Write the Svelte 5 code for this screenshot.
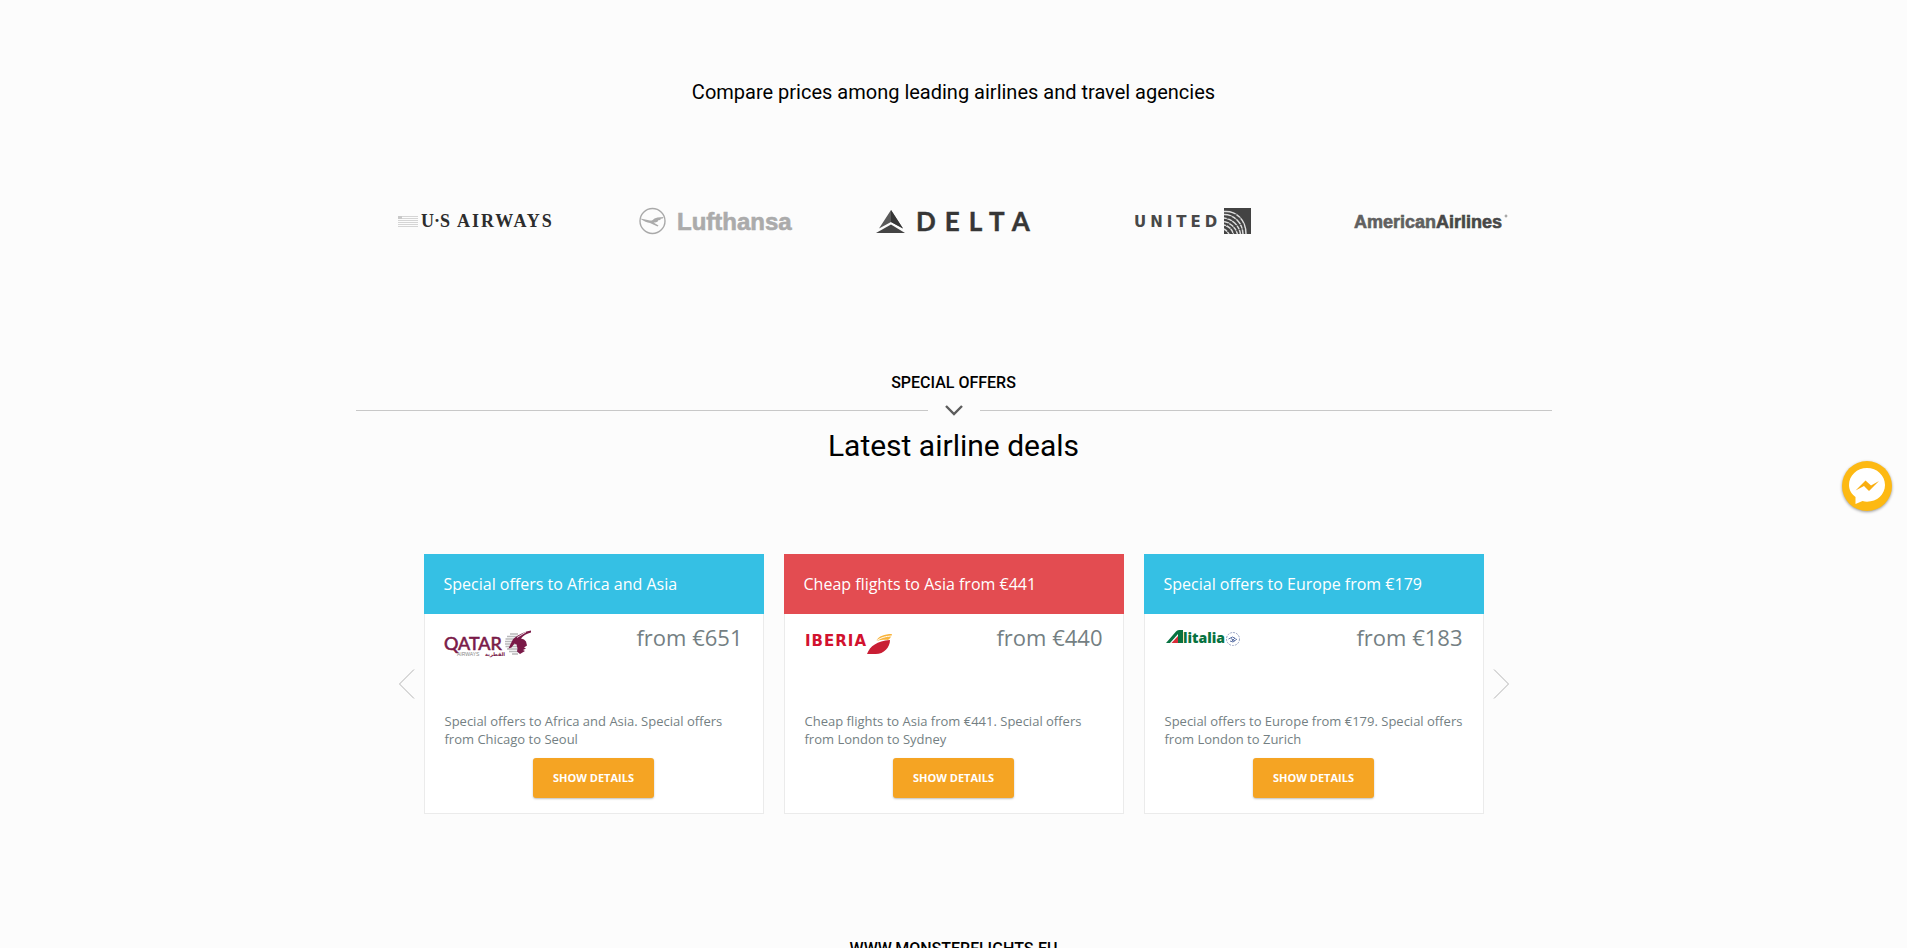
<script lang="ts">
	const offers = [
		{
			airline: 'qatar',
			title: 'Special offers to Africa and Asia',
			price: 'from €651',
			text: 'Special offers to Africa and Asia. Special offers from Chicago to Seoul',
			color: 'blue'
		},
		{
			airline: 'iberia',
			title: 'Cheap flights to Asia from €441',
			price: 'from €440',
			text: 'Cheap flights to Asia from €441. Special offers from London to Sydney',
			color: 'red'
		},
		{
			airline: 'alitalia',
			title: 'Special offers to Europe from €179',
			price: 'from €183',
			text: 'Special offers to Europe from €179. Special offers from London to Zurich',
			color: 'blue'
		}
	];
</script>

<main>
	<!-- AIRLINES -->
	<section class="partners">
		<p class="lead">Compare prices among leading airlines and travel agencies</p>
		<ul class="airlines">
			<li>
				<svg width="154" height="28" viewBox="0 0 154 28" role="img" aria-label="US Airways">
					<path d="M4 8.500h16M4 10.500h16M0 12.500h20M0 14.500h20M0 16.500h20M0 18.500h20" stroke="#d5d5d5" />
					<path d="M0 8h4v3H0z" fill="#c9c9c9" />
					<text x="23" y="19" font-family="Liberation Serif, serif" font-weight="700" font-size="18" fill="#2d2d2d">U·S</text>
					<text x="59" y="19" font-family="Liberation Serif, serif" font-weight="700" font-size="18" letter-spacing="2" fill="#2d2d2d">AIRWAYS</text>
				</svg>
			</li>
			<li>
				<svg width="151" height="28" viewBox="0 0 151 28" role="img" aria-label="Lufthansa">
					<circle cx="13.500" cy="13" r="12.500" fill="none" stroke="#a9a9a9" stroke-width="1.400" />
					<path d="M1.500 10.500l9.500 2c2 .4 3-.8 4.500-2l3-1 6-.5-.8 1.600-2 .2-.4 1.200-2 .2-.6 1.200c-1.300 1-3 1.100-4.200 1l5 3-1 1-7.500-3.500c-3-.2-6-1.600-9.300-3.800z" fill="#ababab" />
					<text x="38" y="22" font-family="Liberation Sans, sans-serif" font-weight="700" font-size="24" fill="#ababab" stroke="#ababab" stroke-width=".6">Lufthansa</text>
				</svg>
			</li>
			<li>
				<svg width="154" height="28" viewBox="0 0 154 28" role="img" aria-label="Delta">
					<path d="M15 2l12 18.500-12-6.500-12 6.500z" fill="#5a5a5a" />
					<path d="M15 2l12 18.500-12-6.500z" fill="#363636" />
					<path d="M15 16.500l14 8.500H0z" fill="#444" />
					<text x="40" y="23" font-family="Lato, sans-serif" font-weight="700" font-size="26" letter-spacing="9" fill="#363636" stroke="#363636" stroke-width=".4">DELTA</text>
				</svg>
			</li>
			<li>
				<svg width="117" height="28" viewBox="0 0 117 28" role="img" aria-label="United">
					<text x="0" y="19" font-family="DejaVu Sans, sans-serif" font-weight="700" font-size="15" letter-spacing="4" fill="#484848">UNITED</text>
					<path d="M90 0h27v26H90z" fill="#434343" />
					<path d="M90 3.500c12-1 22 8 22 22.500M90 6.500c10 0 18.500 8 19 19.500M90 10c8 1 15 7 16.500 16M90 13.500c6 1 12 6 13.500 12.500M90 17c4 1 8 4 9.500 9M90 21c2 1 4 3 5 5" fill="none" stroke="#dcdcdc" stroke-width="1.500" />
					<path d="M90 13q8-6 13-7M90 20q9-10 17-10M92 25q8-9 18-9M98 26q6-6 13-5" fill="none" stroke="#434343" stroke-width=".7" />
				</svg>
			</li>
			<li>
				<svg width="155" height="28" viewBox="0 0 155 28" role="img" aria-label="American Airlines">
					<text x="0" y="20" font-family="Liberation Sans, sans-serif" font-weight="700" font-size="18" fill="#606060" stroke="#606060" stroke-width=".6">American<tspan fill="#484848" stroke="#484848">Airlines</tspan></text>
					<circle cx="152" cy="8" r="1.200" fill="#999" stroke="#bbb" stroke-width=".6" />
				</svg>
			</li>
		</ul>
	</section>

	<!-- DEALS -->
	<section class="deals">
		<h3>SPECIAL OFFERS</h3>
		<div class="divider">
			<svg width="20" height="12" viewBox="0 0 20 12" aria-hidden="true">
				<path d="M2 1l8 8 8-8" fill="none" stroke="#5c5c5c" stroke-width="2.400" />
			</svg>
		</div>
		<h2>Latest airline deals</h2>

		<div class="carousel">
			<button class="arrow" type="button" aria-label="Previous">
				<svg width="16" height="30" viewBox="0 0 16 30"><path d="M15 0.500L0.500 15 15 29.500" fill="none" stroke="#b4b4b4" /></svg>
			</button>
			<div class="cards">
				{#each offers as offer}
					<article class="card">
						<h4 class={offer.color}>{offer.title}</h4>
						<div class="card-body">
							<div class="card-top">
								{#if offer.airline === 'qatar'}
									<svg class="logo" width="90" height="30" viewBox="1 0 90 30" role="img" aria-label="Qatar Airways">
										<text x="0" y="20" font-family="Lato, sans-serif" font-size="18" fill="#7a1a48" stroke="#7a1a48" stroke-width=".6">QATAR</text>
										<text x="13" y="26" font-family="Liberation Sans, sans-serif" font-size="5" fill="#888">AIRWAYS</text>
										<text x="41" y="26" font-family="DejaVu Sans, sans-serif" font-weight="700" font-size="5" fill="#7a1a48">القطرية</text>
										<path d="M66 4h8M63 6.500h12M61.500 9h13M61 11.500h13M61 14h11M61.500 16.500h12M63 19h12M65 21.500h10M68 24h6" stroke="#b9b9bb" stroke-width="1.500" />
										<path d="M87 .5c-6 1-12 4-16 7-3 2-4 6-6.500 11l3-1 3-4 2 1 1 4-.5 3 3 2.500 5-3-2-1 3-1.500-2-1 3-2-1-4-2-2-3-1c2-3 6-5 10-6z" fill="#7a1a48" />
										<path d="M73 7.500l9-5.500" stroke="#fff" stroke-width=".8" />
									</svg>
								{:else if offer.airline === 'iberia'}
									<svg class="logo" width="90" height="30" viewBox="0 0 90 30" role="img" aria-label="Iberia">
										<text x="0" y="16" font-family="DejaVu Sans, sans-serif" font-weight="700" font-size="15" letter-spacing="1" fill="#d2122e">IBERIA</text>
										<path d="M62 24c3-8 10-13 23-14 0 8-7 15-16 14z" fill="#c91e34" />
										<path d="M71 11c3-5 8-7 16-7-1 3-2 5-4 6-2-.5-8 0-12 1z" fill="#f9b43b" />
										<path d="M71 11c6-4 10-4.500 15-5" fill="none" stroke="#fff" />
									</svg>
								{:else}
									<svg class="logo" width="90" height="30" viewBox="0 0 90 30" role="img" aria-label="Alitalia">
										<path d="M1 13L11 1.500Q12 0 14 0h4v13h-5V4L5 13z" fill="#087241" />
										<path d="M6.500 13L13 6v7z" fill="#d82d39" />
										<text x="18" y="13" font-family="Open Sans, sans-serif" font-weight="800" font-size="14" fill="#087241">litalia</text>
										<circle cx="68" cy="9" r="6.500" fill="none" stroke="#9aa5c4" stroke-width="1" stroke-dasharray="2 1" />
										<path d="M63.500 9l4-2 3 1.500M65 11l3 1 4-3M66 8.500l4 2.500M67 11l3-3" fill="none" stroke="#5b71a5" stroke-width="1" />
									</svg>
								{/if}
								<span class="price">{offer.price}</span>
							</div>
							<p>{offer.text}</p>
							<a class="btn" href="#details">SHOW DETAILS</a>
						</div>
					</article>
				{/each}
			</div>
			<button class="arrow" type="button" aria-label="Next">
				<svg width="16" height="30" viewBox="0 0 16 30"><path d="M1 0.500L15.500 15 1 29.500" fill="none" stroke="#b4b4b4" /></svg>
			</button>
		</div>
	</section>

	<h3 class="site">WWW.MONSTERFLIGHTS.EU</h3>
</main>

<button class="messenger" type="button" aria-label="Messenger">
	<svg width="36" height="36" viewBox="0 0 36 36" aria-hidden="true">
		<path d="M18 0C8 0 0 7.500 0 17c0 5 2.500 9 6.500 12v7l7-3c1.500.5 3 .7 4.500.7 10 0 18-7.200 18-16.700S28 0 18 0z" fill="#fff" />
		<path d="M6.500 22.500l10-10 5.500 5 8-4.500-10 10-5-5z" fill="#f9ae10" />
	</svg>
</button>

<style>
	:global(body) {
		margin: 0;
		background: #fcfcfc;
	}

	main {
		box-sizing: border-box;
		height: 100vh;
		overflow: hidden;
		padding-top: 76px;
		font-family: Roboto, sans-serif;
		color: #000;
	}

	section,
	.site {
		width: 100%;
		max-width: 1196px;
		margin: 0 auto;
		text-align: center;
	}

	.lead {
		margin: 0;
		font-size: 20px;
		line-height: 32px;
	}

	.airlines {
		display: grid;
		grid-template-columns: repeat(5, 1fr);
		margin: 0;
		padding: 100px 0 0;
		list-style: none;
	}

	.airlines li {
		display: flex;
		justify-content: center;
	}

	.airlines svg {
		overflow: visible;
	}

	.deals {
		padding-top: 135px;
	}

	h3 {
		margin: 0;
		font-size: 16px;
		line-height: 24px;
		font-weight: 500;
	}

	.divider {
		display: flex;
		align-items: center;
		gap: 16px;
		height: 31px;
	}

	.divider::before,
	.divider::after {
		content: '';
		flex: 1;
		height: 1px;
		background: #c8c8c8;
	}

	h2 {
		margin: 0;
		font-size: 30px;
		line-height: 40px;
		font-weight: 400;
	}

	.carousel {
		display: flex;
		align-items: center;
		justify-content: center;
		gap: 9px;
		padding-top: 88px;
	}

	.arrow {
		padding: 0;
		border: none;
		background: none;
		cursor: pointer;
	}

	.arrow svg {
		display: block;
	}

	.cards {
		display: grid;
		grid-template-columns: repeat(3, 1fr);
		gap: 20px;
		flex: 0 1 1060px;
	}

	.card {
		display: flex;
		flex-direction: column;
		background: #fff;
		font-family: 'Open Sans', sans-serif;
		text-align: left;
	}

	h4 {
		margin: 0;
		padding: 0 20px;
		font-size: 16px;
		line-height: 60px;
		font-weight: 400;
		color: #fff;
	}

	.blue {
		background: #35c0e4;
	}

	.red {
		background: #e34c51;
	}

	.card-body {
		display: flex;
		flex-direction: column;
		padding: 7px 20px 15px;
		border: 1px solid #ebebeb;
		border-top: none;
		color: #747f83;
	}

	.card-top {
		display: flex;
		justify-content: space-between;
		height: 91px;
	}

	.logo {
		margin-top: 9px;
		overflow: visible;
	}

	.price {
		font-size: 22px;
		line-height: 32px;
	}

	p {
		margin: 0;
	}

	.card p {
		font-size: 13px;
		line-height: 18px;
	}

	.btn {
		align-self: center;
		margin-top: 10px;
		padding: 0 20px;
		border-radius: 3px;
		background: #f5a423;
		box-shadow: 0 1px 2px rgba(0, 0, 0, 0.25);
		color: #fff;
		font-size: 11px;
		line-height: 40px;
		font-weight: 700;
		text-decoration: none;
	}

	.site {
		padding-top: 123px;
	}

	.messenger {
		position: fixed;
		top: 461px;
		right: 15px;
		display: flex;
		align-items: center;
		justify-content: center;
		width: 50px;
		height: 50px;
		padding: 0;
		border: none;
		border-radius: 50%;
		background: #fdb913;
		box-shadow: 0 1px 3px rgba(0, 0, 0, 0.4);
		cursor: pointer;
	}
</style>
